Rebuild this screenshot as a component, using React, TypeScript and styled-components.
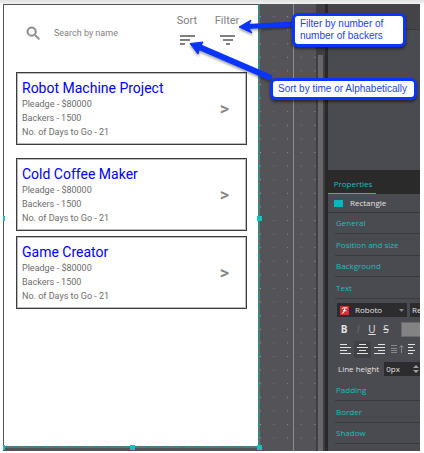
import React from "react";
import styled, { createGlobalStyle, css } from "styled-components";

const GlobalStyle = createGlobalStyle`
  * { box-sizing: border-box; }
  body { margin: 0; background: #fff; font-family: Roboto, sans-serif; }
  button, input, select { font: inherit; color: inherit; margin: 0; border: 0; padding: 0; background: none; border-radius: 0; }
  svg { flex: none; }
`;

const Page = styled.main`
  display: flex;
  min-height: 100vh;
  padding: 4px 4px 2px 3px;
  overflow: hidden;
  background: linear-gradient(#e2e2e2, #f2f2f2 4px, #fff 4px);
`;

const Workspace = styled.div`
  position: relative;
  flex: 1;
  display: grid;
  grid-template-columns: minmax(0, 1fr) 56px 12px 92px;
  background: #545358;
`;

const Artboard = styled.section`
  position: relative;
  display: flex;
  flex-direction: column;
  margin-bottom: 3px;
  border: 1px solid #555;
  border-right: 2px dashed #2f8a8b;
  border-bottom: 2px dashed #2f8a8b;
  background: linear-gradient(#fff, #fff) padding-box, #64706f border-box;
`;

const Handle = styled.span<{ $x: string; $y: string; $half?: boolean }>`
  position: absolute;
  left: ${(p) => p.$x};
  top: ${(p) => p.$y};
  width: ${(p) => (p.$half ? 2 : 5)}px;
  height: 5px;
  margin: ${(p) => (p.$half ? "-1px 0 0 -1px" : "-1px")};
  background: #1fbcc0;
`;

const Toolbar = styled.header`
  display: flex;
  align-items: flex-start;
  height: 67px;
  padding: 9px 11px 0 22px;
`;

const SearchLabel = styled.label`
  display: flex;
  flex: 1;
  min-width: 0;
  align-items: center;
  gap: 13px;
  padding-top: 11px;
  color: #888;
`;

const SearchInput = styled.input`
  width: 100%;
  min-width: 0;
  height: 16px;
  font-size: 9px;
  outline: 0;
  &::placeholder { color: #808080; opacity: 1; }
`;

const ToolButton = styled.button`
  display: flex;
  flex-direction: column;
  align-items: center;
  gap: 7px;
  width: 40px;
  font-size: 11px;
  line-height: 14px;
  color: #808080;
`;

const Projects = styled.div`
  display: flex;
  flex-direction: column;
  padding: 0 11px 0 12px;
`;

const Card = styled.article<{ $gap: number }>`
  display: flex;
  align-items: center;
  justify-content: space-between;
  height: 73px;
  margin-bottom: ${(p) => p.$gap}px;
  padding: 0 17px 0 5px;
  border: 1px solid #3c3c3e;
  box-shadow: inset 0 0 0 1px #bbb;
`;

const Title = styled.h2`
  margin: 0;
  font-size: 14px;
  font-weight: 400;
  line-height: 18px;
  color: #0000f5;
`;

const Detail = styled.p`
  margin: 0;
  font-size: 9px;
  line-height: 14px;
  color: #6c6c6c;
`;

const Open = styled.button`
  font-size: 18px;
  font-weight: 500;
  line-height: 20px;
  color: #858585;
`;

const Canvas = styled.div`
  background: linear-gradient(#8d8d90, #8d8d90) 33px 0 / 1px 100% no-repeat;
`;

const Dots = styled.svg`
  display: block;
  width: 100%;
  height: 100%;
`;

const ScrollTrack = styled.div`
  display: flex;
  padding: 51px 2px 0 2px;
  border-right: 3px solid #2a2a2b;
  background: #3f3f43;
`;

const ScrollThumb = styled.div`
  flex: 1;
  background: #68686a;
`;

const Panel = styled.aside`
  display: flex;
  flex-direction: column;
  min-width: 0;
  overflow: hidden;
  background: #4a4b50;
  font-family: "Open Sans", sans-serif;
  font-size: 8px;
  line-height: 12px;
  color: #e2e2e2;
`;

const PanelTop = styled.div`
  height: 26px;
  border-bottom: 1px solid #38383b;
  background: #444448;
`;

const Preview = styled.div`
  height: 140px;
`;

const Tabs = styled.nav`
  height: 24px;
  background: #2a2a2b;
`;

const Tab = styled.button`
  width: 48px;
  height: 24px;
  padding: 5px 0 0 2px;
  border-bottom: 1px solid #1fbcc0;
  color: #1fbcc0;
`;

const Selected = styled.div`
  display: flex;
  align-items: center;
  gap: 7px;
  height: 19px;
  padding-left: 6px;
  border-bottom: 1px solid #36373a;
`;

const Swatch = styled.span`
  width: 9px;
  height: 7px;
  background: #00b9be;
`;

const Sections = styled.div`
  display: grid;
  grid-auto-rows: 21px 22px;
  padding-left: 7px;
`;

const Section = styled.button`
  padding-left: 1px;
  border-bottom: 1px solid #3a3b3e;
  color: #1fbcbe;
  text-align: left;
`;

const TextControls = styled.div`
  display: flex;
  flex-direction: column;
  height: 81px;
  padding: 4px 0 0 9px;
`;

const Row = styled.div`
  display: flex;
  align-items: center;
  white-space: nowrap;
`;

const FontRow = styled(Row)`
  gap: 3px;
  height: 14px;
`;

const darkField = css`
  height: 14px;
  background: #2c2c2e;
`;

const FontPicker = styled.label`
  ${darkField}
  display: flex;
  flex: none;
  align-items: center;
  gap: 6px;
  width: 70px;
  padding: 0 3px;
`;

const FontSelect = styled.select`
  flex: 1;
  min-width: 0;
  appearance: none;
`;

const StyleSelect = styled.select`
  ${darkField}
  flex: none;
  width: 40px;
  padding-left: 2px;
  appearance: none;
`;

const FormatRow = styled(Row)`
  height: 24px;
`;

const Format = styled.button<{ $kind: "b" | "i" | "u" | "s" }>`
  flex: none;
  width: 14px;
  font-size: 10px;
  ${(p) => p.$kind === "b" && "font-weight: 700;"}
  ${(p) => p.$kind === "i" && "font-style: italic; color: #6d6d71;"}
  ${(p) => p.$kind === "u" && "text-decoration: underline;"}
  ${(p) => p.$kind === "s" && "text-decoration: line-through;"}
`;

const ColorButton = styled.button`
  flex: 1;
  height: 15px;
  margin-left: 8px;
  border: 1px solid #6a6a6c;
  border-right: 0;
  background: #838384;
`;

const AlignRow = styled(Row)`
  height: 17px;
`;

const Align = styled.button<{ $active?: boolean }>`
  display: flex;
  flex: none;
  align-items: center;
  justify-content: center;
  width: 17px;
  height: 17px;
  background: ${(p) => (p.$active ? "#404145" : "none")};
`;

const LineRow = styled.label`
  display: flex;
  align-items: center;
  gap: 5px;
  height: 22px;
  padding-left: 1px;
  white-space: nowrap;
`;

const LineField = styled.span`
  ${darkField}
  display: flex;
  flex: 1;
  align-items: center;
  min-width: 0;
  padding: 0 1px 0 2px;
`;

const LineInput = styled.input`
  flex: 1;
  min-width: 0;
  width: 20px;
  height: 12px;
`;

const Arrows = styled.svg`
  position: absolute;
  top: 0;
  right: 0;
  width: 240px;
  height: 100px;
  pointer-events: none;
  filter: drop-shadow(0 2px 1px rgba(0, 0, 0, 0.35));
`;

const Callout = styled.aside<{ $top: number; $right: number; $width: number }>`
  position: absolute;
  top: ${(p) => p.$top}px;
  right: ${(p) => p.$right}px;
  width: ${(p) => p.$width}px;
  padding: 2px 4px 2px 5px;
  border: 3px solid #0a34ff;
  border-radius: 6px;
  background: #fff;
  box-shadow: 0 2px 3px rgba(0, 0, 0, 0.5);
  font-family: "Liberation Sans", sans-serif;
  font-size: 10px;
  line-height: 12px;
  color: #1c3ff0;
`;

const projects = [
  { title: "Robot Machine Project", gap: 13 },
  { title: "Cold Coffee Maker", gap: 5 },
  { title: "Game Creator", gap: 0 },
];

const Lines = ({ rows, width = 11 }: { rows: number[][]; width?: number }) => (
  <svg width={width} height="11" viewBox={`0 0 ${width} 11`} fill="currentColor">
    {rows.map(([x, w], i) => (
      <rect key={i} x={x} y={i * 3} width={w} height="1" />
    ))}
  </svg>
);

export default function App() {
  return (
    <>
      <GlobalStyle />
      <Page>
        <Workspace>
          <Artboard>
            <Toolbar>
              <SearchLabel>
                <svg width="15" height="15" viewBox="2 2 20 20" fill="currentColor" aria-label="Search">
                  <path d="M15.5 14h-.79l-.28-.27A6.47 6.47 0 0 0 16 9.5 6.5 6.5 0 1 0 9.5 16c1.61 0 3.09-.59 4.23-1.57l.27.28v.79l5 4.99L20.49 19l-4.99-5zm-6 0C7.01 14 5 11.99 5 9.5S7.01 5 9.5 5 14 7.01 14 9.5 11.99 14 9.5 14z" stroke="currentColor" strokeWidth=".5" />
                </svg>
                <SearchInput type="text" placeholder="Search by name" />
              </SearchLabel>
              <ToolButton>
                Sort
                <svg width="15" height="10" fill="currentColor">
                  <path d="M0 0h15v2H0zM0 4h10v2H0zM0 8h5v2H0z" />
                </svg>
              </ToolButton>
              <ToolButton>
                Filter
                <svg width="15" height="10" fill="currentColor">
                  <path d="M0 0h15v2H0zM3 4h10v2H3zM6 8h4v2H6z" />
                </svg>
              </ToolButton>
            </Toolbar>
            <Projects>
              {projects.map((p) => (
                <Card key={p.title} $gap={p.gap}>
                  <div>
                    <Title>{p.title}</Title>
                    <Detail>Pleadge - $80000</Detail>
                    <Detail>Backers - 1500</Detail>
                    <Detail>No. of Days to Go - 21</Detail>
                  </div>
                  <Open aria-label={`Open ${p.title}`}>&gt;</Open>
                </Card>
              ))}
            </Projects>
            <Handle $x="0px" $y="48%" $half />
            <Handle $x="100%" $y="48%" />
            <Handle $x="0px" $y="100%" $half />
            <Handle $x="50%" $y="100%" />
            <Handle $x="100%" $y="100%" />
          </Artboard>
          <Canvas>
            <Dots aria-hidden="true">
              <defs>
                <pattern id="grid" x="0" y="12" width="27.2" height="13.6" patternUnits="userSpaceOnUse">
                  <rect width="1" height="1" fill="#97979a" />
                  <rect x="13" width="2" height="1" fill="#69696d" />
                </pattern>
              </defs>
              <rect width="100%" height="100%" fill="url(#grid)" />
            </Dots>
          </Canvas>
          <ScrollTrack>
            <ScrollThumb />
          </ScrollTrack>
          <Panel>
            <PanelTop />
            <Preview />
            <Tabs>
              <Tab>Properties</Tab>
            </Tabs>
            <Selected>
              <Swatch />
              Rectangle
            </Selected>
            <Sections>
              {["General", "Position and size", "Background", "Text"].map((s) => (
                <Section key={s}>{s}</Section>
              ))}
            </Sections>
            <TextControls>
              <FontRow>
                <FontPicker>
                  <svg width="9" height="9" viewBox="0 0 9 9" aria-label="Font">
                    <rect width="9" height="9" fill="#d2322d" />
                    <path d="M2 2.5Q4 1 7.5 2M5 2Q4.500 7 2 7.500M3 4.700h3.500" fill="none" stroke="#fff" />
                  </svg>
                  <FontSelect>
                    <option>Roboto</option>
                  </FontSelect>
                  <svg width="5" height="3" fill="#88888a">
                    <path d="M0 0h5L2.500 3z" />
                  </svg>
                </FontPicker>
                <StyleSelect aria-label="Font style">
                  <option>Regular</option>
                </StyleSelect>
              </FontRow>
              <FormatRow>
                <Format $kind="b">B</Format>
                <Format $kind="i">I</Format>
                <Format $kind="u">U</Format>
                <Format $kind="s">S</Format>
                <ColorButton aria-label="Text color" />
              </FormatRow>
              <AlignRow>
                <Align aria-label="Align left">
                  <Lines rows={[[0, 7], [0, 11], [0, 7], [0, 11]]} />
                </Align>
                <Align aria-label="Align center" $active>
                  <Lines rows={[[2, 7], [0, 11], [2, 7], [0, 11]]} />
                </Align>
                <Align aria-label="Align right">
                  <Lines rows={[[4, 7], [0, 11], [4, 7], [0, 11]]} />
                </Align>
                <Align aria-label="Align top">
                  <svg width="14" height="11" stroke="#88888c" fill="none">
                    <path d="M1 1.500h6M1 4.500h6M1 6.500h6M1 8.500h6M11.500 9V1M9.500 3.500l2-2 2 2" />
                  </svg>
                </Align>
                <Align aria-label="Align middle">
                  <Lines rows={[[0, 7], [0, 5], [0, 7], [0, 5]]} />
                </Align>
              </AlignRow>
              <LineRow>
                Line height
                <LineField>
                  <LineInput type="text" defaultValue="0px" />
                  <svg width="6" height="8" fill="#a0a0a2">
                    <path d="M0 3l3-3 3 3zM0 5h6L3 8z" />
                  </svg>
                </LineField>
              </LineRow>
            </TextControls>
            <Sections>
              {["Padding", "Border", "Shadow"].map((s) => (
                <Section key={s}>{s}</Section>
              ))}
            </Sections>
          </Panel>
          <Arrows viewBox="180 4 240 100">
            <path d="M247 26.500L294 24" stroke="#0a34ff" strokeWidth="5" />
            <path d="M239 27L251 20L248 26.500L252 33Z" fill="#0a34ff" stroke="#0a34ff" strokeLinejoin="round" />
            <path d="M197 46L269 77" stroke="#0a34ff" strokeWidth="6" strokeLinecap="round" />
            <path d="M190 43.500L203 42L200 47L198 54Z" fill="#0a34ff" stroke="#0a34ff" strokeLinejoin="round" />
          </Arrows>
          <Callout $top={9} $right={14} $width={114}>
            Filter by number of number of backers
          </Callout>
          <Callout $top={74} $right={3} $width={147}>
            Sort by time or Alphabetically
          </Callout>
        </Workspace>
      </Page>
    </>
  );
}
